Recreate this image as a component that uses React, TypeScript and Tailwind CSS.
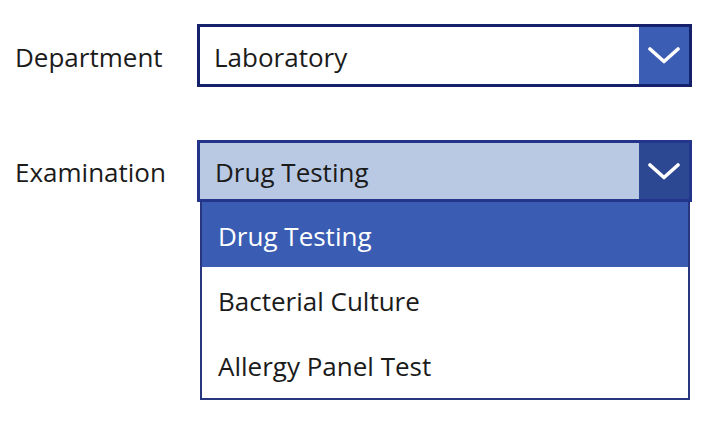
import React from "react";

const Chevron = () => (
  <svg width="32" height="17" viewBox="0 0 32 17" fill="none">
    <path d="M2 2 L16 14.5 L30 2" stroke="#ffffff" strokeWidth="3.6" strokeLinecap="round" strokeLinejoin="round" />
  </svg>
);

const options = ["Drug Testing", "Bacterial Culture", "Allergy Panel Test"];

export default function App() {
  return (
    <div
      className="min-h-screen bg-white pl-[15px] pt-[24px] text-[26px] text-[#1b1b1b]"
      style={{ fontFamily: '"Open Sans", "Noto Sans", sans-serif' }}
    >
      {/* Department */}
      <div className="flex items-center">
        <div className="w-[182px] pt-[3px]">Department</div>
        <div className="flex h-[63px] w-[495px] border-[3px] border-[#16216b] bg-white">
          <div className="flex flex-1 items-center pl-[14px] pt-[3px]">Laboratory</div>
          <div className="flex w-[50px] items-center justify-center bg-[#3c5db4]">
            <Chevron />
          </div>
        </div>
      </div>

      {/* Examination */}
      <div className="mt-[53px] flex items-start">
        <div className="flex h-[62px] w-[182px] items-center pt-[3px]">Examination</div>
        <div className="flex flex-col">
          <div className="flex h-[62px] w-[495px] border-[3px] border-[#23358a] bg-[#b9c9e3]">
            <div className="flex flex-1 items-center pl-[15px] pt-[3px]">Drug Testing</div>
            <div className="flex w-[50px] items-center justify-center bg-[#2d4892]">
              <Chevron />
            </div>
          </div>
          <div className="ml-[3px] flex h-[198px] w-[490px] flex-col border-[2.5px] border-t-0 border-[#27367f] bg-white">
            {options.map((o, i) => (
              <div
                key={o}
                className={
                  "flex flex-1 items-center pl-[16px] pt-[3px] " +
                  (i === 0 ? "bg-[#3a5db3] text-white" : "")
                }
              >
                {o}
              </div>
            ))}
          </div>
        </div>
      </div>
    </div>
  );
}
